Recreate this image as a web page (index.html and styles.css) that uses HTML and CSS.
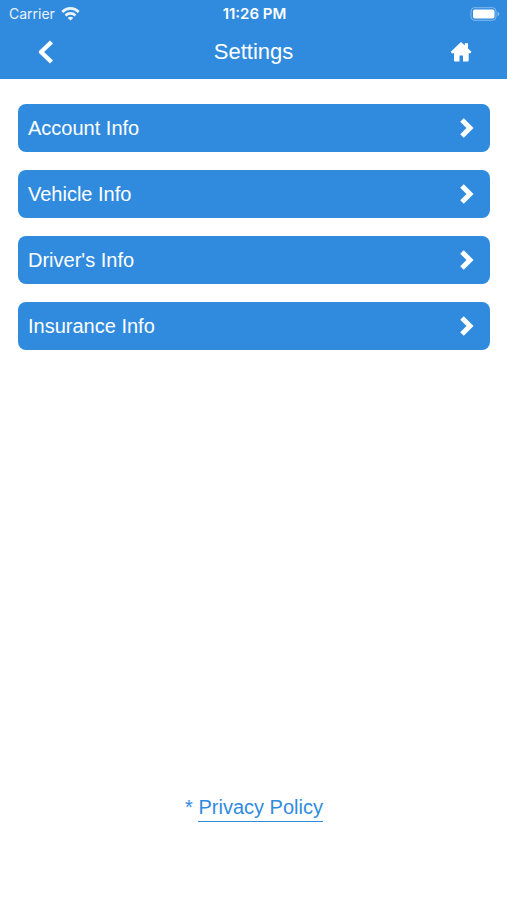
FILE: index.html
```html
<!DOCTYPE html>
<html lang="en">
<head>
<meta charset="utf-8">
<meta name="viewport" content="width=device-width, initial-scale=1">
<title>Settings</title>
<link rel="stylesheet" href="styles.css">
</head>
<body>
<header class="top">
  <div class="status">
    <div class="carrier">
      <span>Carrier</span>
      <svg width="19" height="14" viewBox="0 0 19 14" fill="none" stroke="#fff" stroke-width="2.8" aria-hidden="true">
        <path d="M1.300 4.900C6 .3 13 .3 17.700 4.900"/>
        <path d="M4.500 8.400C7.300 5.700 11.700 5.700 14.500 8.400"/>
        <path d="M9.500 13.600 6.700 10.900C8.300 9.500 10.700 9.500 12.300 10.900Z" fill="#fff" stroke="none"/>
      </svg>
    </div>
    <time class="clock">11:26 PM</time>
    <svg class="battery" width="30" height="14" viewBox="0 0 30 14" aria-hidden="true">
      <rect x="1" y=".7" width="25" height="12.600" rx="3.500" fill="none" stroke="#fff" stroke-opacity=".4"/>
      <rect x="3" y="2.500" width="21.500" height="9" rx="1.800" fill="#fff"/>
      <path d="M27.600 4.800v4.400c1-.4 1.700-1.200 1.700-2.200s-.7-1.800-1.700-2.200Z" fill="#fff" fill-opacity=".45"/>
    </svg>
  </div>
  <nav class="bar">
    <button class="icon-button" type="button" aria-label="Back">
      <svg width="18" height="24" viewBox="0 0 18 24" fill="none" stroke="#fff" stroke-width="4.4" stroke-linejoin="round" aria-hidden="true"><path d="M14.500 2 4 12 14.500 22"/></svg>
    </button>
    <h1 class="title">Settings</h1>
    <button class="icon-button" type="button" aria-label="Home">
      <svg width="22" height="20" viewBox="0 0 22 20" fill="#fff" aria-hidden="true"><path d="M11 0 14.800 3.500V1.300h3.200v5.100L21.500 9.800l-1 1.400H18.700V18.500q0 1-1 1H13V13.500H9.500v6H5q-1 0-1-1V11.200H1.700L.8 9.800Z"/></svg>
    </button>
  </nav>
</header>
<main class="content">
  <div class="menu">
    <button class="row" type="button">Account Info
      <svg class="chevron" width="14" height="20" viewBox="0 0 14 20" aria-hidden="true"><path d="M2 2 10 10 2 18"/></svg></button>
    <button class="row" type="button">Vehicle Info
      <svg class="chevron" width="14" height="20" viewBox="0 0 14 20" aria-hidden="true"><path d="M2 2 10 10 2 18"/></svg></button>
    <button class="row" type="button">Driver's Info
      <svg class="chevron" width="14" height="20" viewBox="0 0 14 20" aria-hidden="true"><path d="M2 2 10 10 2 18"/></svg></button>
    <button class="row" type="button">Insurance Info
      <svg class="chevron" width="14" height="20" viewBox="0 0 14 20" aria-hidden="true"><path d="M2 2 10 10 2 18"/></svg></button>
  </div>
  <p class="policy"><span>*</span> <a href="#privacy">Privacy Policy</a></p>
</main>
</body>
</html>
```
FILE: styles.css
```css
* {
  box-sizing: border-box;
}

body {
  margin: 0;
  min-height: 100vh;
  display: flex;
  flex-direction: column;
  background: #fff;
  color: #308bde;
  font-family: "Liberation Sans", Arial, sans-serif;
  font-size: 20px;
}

svg {
  display: block;
}

.top {
  background: #308bde;
  color: #fff;
  padding-bottom: 2px;
}

.status {
  display: grid;
  grid-template-columns: 1fr auto 1fr;
  align-items: center;
  height: 27px;
  padding: 0 7px 0 9px;
  font-family: Inter, "Liberation Sans", sans-serif;
  font-size: 14px;
}

.carrier {
  display: flex;
  align-items: center;
  gap: 6px;
  opacity: 0.9;
}

.clock {
  font-size: 15px;
  font-weight: 600;
}

.battery {
  justify-self: end;
}

.bar {
  display: grid;
  grid-template-columns: 1fr auto 1fr;
  align-items: center;
  height: 50px;
  padding: 0 24px;
}

.icon-button {
  display: flex;
  align-items: center;
  justify-content: center;
  width: 44px;
  height: 44px;
  padding: 0;
  border: 0;
  background: none;
}

.icon-button:last-child {
  justify-self: end;
}

.title {
  margin: 0;
  font-size: 22px;
  font-weight: 400;
}

.content {
  flex: 1;
  display: flex;
  flex-direction: column;
  justify-content: space-between;
  padding: 25px 17px 78px 18px;
}

.menu {
  display: flex;
  flex-direction: column;
  gap: 18px;
}

.row {
  display: flex;
  align-items: center;
  justify-content: space-between;
  height: 48px;
  padding: 0 16px 0 10px;
  border: 0;
  border-radius: 8px;
  background: #308bde;
  color: #fff;
  font: inherit;
  text-align: left;
}

.chevron {
  fill: none;
  stroke: #fff;
  stroke-width: 5;
}

.policy {
  margin: 0;
  line-height: 28px;
  text-align: center;
}

.policy a {
  display: inline-block;
  border-bottom: 1px solid #308bde;
  color: inherit;
  text-decoration: none;
}
```
